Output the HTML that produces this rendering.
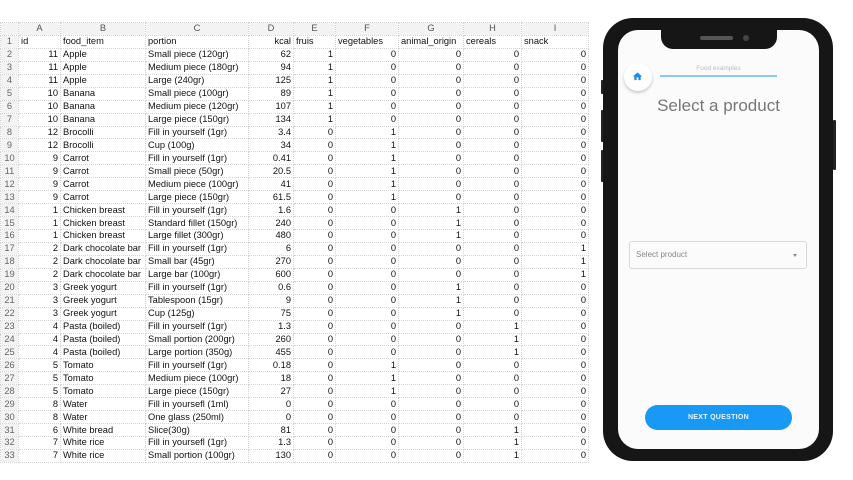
<!DOCTYPE html>
<html><head><meta charset="utf-8"><style>
body{margin:0;width:853px;height:480px;background:#fff;position:relative;overflow:hidden;font-family:"Liberation Sans",sans-serif}
table{position:absolute;left:0;top:22px;width:588px;border-collapse:collapse;table-layout:fixed;font-size:9.3px;color:#111}
td{height:12.95px;padding:0 2px;border:1px dotted #d4d4d4;white-space:nowrap;overflow:hidden;line-height:11px;box-sizing:border-box}
tr.h td{background:#f3f3f3;color:#555;text-align:center}
td:first-child{background:#f3f3f3;color:#666;text-align:center;padding:0}
.r{text-align:right}
.phone{position:absolute;left:603px;top:18px;width:230px;height:443px;background:#161616;border-radius:30px}
.screen{position:absolute;left:618px;top:30px;width:201px;height:419px;background:#fbfbfb;border-radius:20px}
.notch{position:absolute;left:661px;top:28px;width:116px;height:21px;background:#161616;border-radius:0 0 12px 12px}
.btnside{position:absolute;background:#222;width:3px;border-radius:1px}
</style></head><body>
<table>
<colgroup><col style="width:18px"><col style="width:42px"><col style="width:85px"><col style="width:103px"><col style="width:45px"><col style="width:42px"><col style="width:63px"><col style="width:65px"><col style="width:58px"><col style="width:67px"></colgroup>
<tr class="h"><td></td><td>A</td><td>B</td><td>C</td><td>D</td><td>E</td><td>F</td><td>G</td><td>H</td><td>I</td></tr>
<tr><td>1</td><td>id</td><td>food_item</td><td>portion</td><td class="r">kcal</td><td>fruis</td><td>vegetables</td><td>animal_origin</td><td>cereals</td><td>snack</td></tr>
<tr><td>2</td><td class="r">11</td><td>Apple</td><td>Small piece (120gr)</td><td class="r">62</td><td class="r">1</td><td class="r">0</td><td class="r">0</td><td class="r">0</td><td class="r">0</td></tr>
<tr><td>3</td><td class="r">11</td><td>Apple</td><td>Medium piece (180gr)</td><td class="r">94</td><td class="r">1</td><td class="r">0</td><td class="r">0</td><td class="r">0</td><td class="r">0</td></tr>
<tr><td>4</td><td class="r">11</td><td>Apple</td><td>Large (240gr)</td><td class="r">125</td><td class="r">1</td><td class="r">0</td><td class="r">0</td><td class="r">0</td><td class="r">0</td></tr>
<tr><td>5</td><td class="r">10</td><td>Banana</td><td>Small piece (100gr)</td><td class="r">89</td><td class="r">1</td><td class="r">0</td><td class="r">0</td><td class="r">0</td><td class="r">0</td></tr>
<tr><td>6</td><td class="r">10</td><td>Banana</td><td>Medium piece (120gr)</td><td class="r">107</td><td class="r">1</td><td class="r">0</td><td class="r">0</td><td class="r">0</td><td class="r">0</td></tr>
<tr><td>7</td><td class="r">10</td><td>Banana</td><td>Large piece (150gr)</td><td class="r">134</td><td class="r">1</td><td class="r">0</td><td class="r">0</td><td class="r">0</td><td class="r">0</td></tr>
<tr><td>8</td><td class="r">12</td><td>Brocolli</td><td>Fill in yourself (1gr)</td><td class="r">3.4</td><td class="r">0</td><td class="r">1</td><td class="r">0</td><td class="r">0</td><td class="r">0</td></tr>
<tr><td>9</td><td class="r">12</td><td>Brocolli</td><td>Cup (100g)</td><td class="r">34</td><td class="r">0</td><td class="r">1</td><td class="r">0</td><td class="r">0</td><td class="r">0</td></tr>
<tr><td>10</td><td class="r">9</td><td>Carrot</td><td>Fill in yourself (1gr)</td><td class="r">0.41</td><td class="r">0</td><td class="r">1</td><td class="r">0</td><td class="r">0</td><td class="r">0</td></tr>
<tr><td>11</td><td class="r">9</td><td>Carrot</td><td>Small piece (50gr)</td><td class="r">20.5</td><td class="r">0</td><td class="r">1</td><td class="r">0</td><td class="r">0</td><td class="r">0</td></tr>
<tr><td>12</td><td class="r">9</td><td>Carrot</td><td>Medium piece (100gr)</td><td class="r">41</td><td class="r">0</td><td class="r">1</td><td class="r">0</td><td class="r">0</td><td class="r">0</td></tr>
<tr><td>13</td><td class="r">9</td><td>Carrot</td><td>Large piece (150gr)</td><td class="r">61.5</td><td class="r">0</td><td class="r">1</td><td class="r">0</td><td class="r">0</td><td class="r">0</td></tr>
<tr><td>14</td><td class="r">1</td><td>Chicken breast</td><td>Fill in yourself (1gr)</td><td class="r">1.6</td><td class="r">0</td><td class="r">0</td><td class="r">1</td><td class="r">0</td><td class="r">0</td></tr>
<tr><td>15</td><td class="r">1</td><td>Chicken breast</td><td>Standard fillet (150gr)</td><td class="r">240</td><td class="r">0</td><td class="r">0</td><td class="r">1</td><td class="r">0</td><td class="r">0</td></tr>
<tr><td>16</td><td class="r">1</td><td>Chicken breast</td><td>Large fillet (300gr)</td><td class="r">480</td><td class="r">0</td><td class="r">0</td><td class="r">1</td><td class="r">0</td><td class="r">0</td></tr>
<tr><td>17</td><td class="r">2</td><td>Dark chocolate bar</td><td>Fill in yourself (1gr)</td><td class="r">6</td><td class="r">0</td><td class="r">0</td><td class="r">0</td><td class="r">0</td><td class="r">1</td></tr>
<tr><td>18</td><td class="r">2</td><td>Dark chocolate bar</td><td>Small bar (45gr)</td><td class="r">270</td><td class="r">0</td><td class="r">0</td><td class="r">0</td><td class="r">0</td><td class="r">1</td></tr>
<tr><td>19</td><td class="r">2</td><td>Dark chocolate bar</td><td>Large bar (100gr)</td><td class="r">600</td><td class="r">0</td><td class="r">0</td><td class="r">0</td><td class="r">0</td><td class="r">1</td></tr>
<tr><td>20</td><td class="r">3</td><td>Greek yogurt</td><td>Fill in yourself (1gr)</td><td class="r">0.6</td><td class="r">0</td><td class="r">0</td><td class="r">1</td><td class="r">0</td><td class="r">0</td></tr>
<tr><td>21</td><td class="r">3</td><td>Greek yogurt</td><td>Tablespoon (15gr)</td><td class="r">9</td><td class="r">0</td><td class="r">0</td><td class="r">1</td><td class="r">0</td><td class="r">0</td></tr>
<tr><td>22</td><td class="r">3</td><td>Greek yogurt</td><td>Cup (125g)</td><td class="r">75</td><td class="r">0</td><td class="r">0</td><td class="r">1</td><td class="r">0</td><td class="r">0</td></tr>
<tr><td>23</td><td class="r">4</td><td>Pasta (boiled)</td><td>Fill in yourself (1gr)</td><td class="r">1.3</td><td class="r">0</td><td class="r">0</td><td class="r">0</td><td class="r">1</td><td class="r">0</td></tr>
<tr><td>24</td><td class="r">4</td><td>Pasta (boiled)</td><td>Small portion (200gr)</td><td class="r">260</td><td class="r">0</td><td class="r">0</td><td class="r">0</td><td class="r">1</td><td class="r">0</td></tr>
<tr><td>25</td><td class="r">4</td><td>Pasta (boiled)</td><td>Large portion (350g)</td><td class="r">455</td><td class="r">0</td><td class="r">0</td><td class="r">0</td><td class="r">1</td><td class="r">0</td></tr>
<tr><td>26</td><td class="r">5</td><td>Tomato</td><td>Fill in yourself (1gr)</td><td class="r">0.18</td><td class="r">0</td><td class="r">1</td><td class="r">0</td><td class="r">0</td><td class="r">0</td></tr>
<tr><td>27</td><td class="r">5</td><td>Tomato</td><td>Medium piece (100gr)</td><td class="r">18</td><td class="r">0</td><td class="r">1</td><td class="r">0</td><td class="r">0</td><td class="r">0</td></tr>
<tr><td>28</td><td class="r">5</td><td>Tomato</td><td>Large piece (150gr)</td><td class="r">27</td><td class="r">0</td><td class="r">1</td><td class="r">0</td><td class="r">0</td><td class="r">0</td></tr>
<tr><td>29</td><td class="r">8</td><td>Water</td><td>Fill in yoursefl (1ml)</td><td class="r">0</td><td class="r">0</td><td class="r">0</td><td class="r">0</td><td class="r">0</td><td class="r">0</td></tr>
<tr><td>30</td><td class="r">8</td><td>Water</td><td>One glass (250ml)</td><td class="r">0</td><td class="r">0</td><td class="r">0</td><td class="r">0</td><td class="r">0</td><td class="r">0</td></tr>
<tr><td>31</td><td class="r">6</td><td>White bread</td><td>Slice(30g)</td><td class="r">81</td><td class="r">0</td><td class="r">0</td><td class="r">0</td><td class="r">1</td><td class="r">0</td></tr>
<tr><td>32</td><td class="r">7</td><td>White rice</td><td>Fill in yoursefl (1gr)</td><td class="r">1.3</td><td class="r">0</td><td class="r">0</td><td class="r">0</td><td class="r">1</td><td class="r">0</td></tr>
<tr><td>33</td><td class="r">7</td><td>White rice</td><td>Small portion (100gr)</td><td class="r">130</td><td class="r">0</td><td class="r">0</td><td class="r">0</td><td class="r">1</td><td class="r">0</td></tr>
</table>

<div class="btnside" style="left:601px;top:80px;height:14px"></div>
<div class="btnside" style="left:601px;top:110px;height:32px"></div>
<div class="btnside" style="left:601px;top:150px;height:32px"></div>
<div class="btnside" style="left:833px;top:120px;height:50px"></div>
<div class="phone"></div>
<div class="screen"></div>
<div class="notch"></div>
<div style="position:absolute;left:700px;top:36px;width:33px;height:4px;background:#555;border-radius:2px"></div>
<div style="position:absolute;left:743px;top:35px;width:6px;height:6px;background:#444;border-radius:50%"></div>

<div style="position:absolute;left:624px;top:63px;width:28px;height:28px;border-radius:50%;background:#fff;box-shadow:0 2px 3px rgba(0,0,0,.2)"></div>
<svg style="position:absolute;left:632px;top:71px" width="11" height="11" viewBox="0 0 24 24"><path d="M10 20v-6h4v6h5v-8h3L12 3 2 12h3v8z" fill="#1a8cf0"/></svg>
<div style="position:absolute;left:660px;top:65px;width:117px;text-align:center;font-size:6.5px;color:#bbb">Food examples</div>
<div style="position:absolute;left:660px;top:75px;width:117px;height:1.5px;background:#8cc8f5"></div>
<div style="position:absolute;left:618px;top:96px;width:201px;text-align:center;font-size:17px;color:#777">Select a product</div>

<div style="position:absolute;left:629px;top:241px;width:178px;height:28px;border:1px solid #d8d8d8;border-radius:3px;box-sizing:border-box;background:#fbfbfb"></div>
<div style="position:absolute;left:636px;top:250px;font-size:8px;color:#888">Select product</div>
<div style="position:absolute;left:793px;top:254px;width:0;height:0;border-left:2.5px solid transparent;border-right:2.5px solid transparent;border-top:3px solid #888"></div>

<div style="position:absolute;left:645px;top:405px;width:147px;height:25px;border-radius:13px;background:#1899f5;color:#e8f4ff;font-size:7px;font-weight:bold;text-align:center;line-height:25px;letter-spacing:.3px">NEXT QUESTION</div>
</body></html>
